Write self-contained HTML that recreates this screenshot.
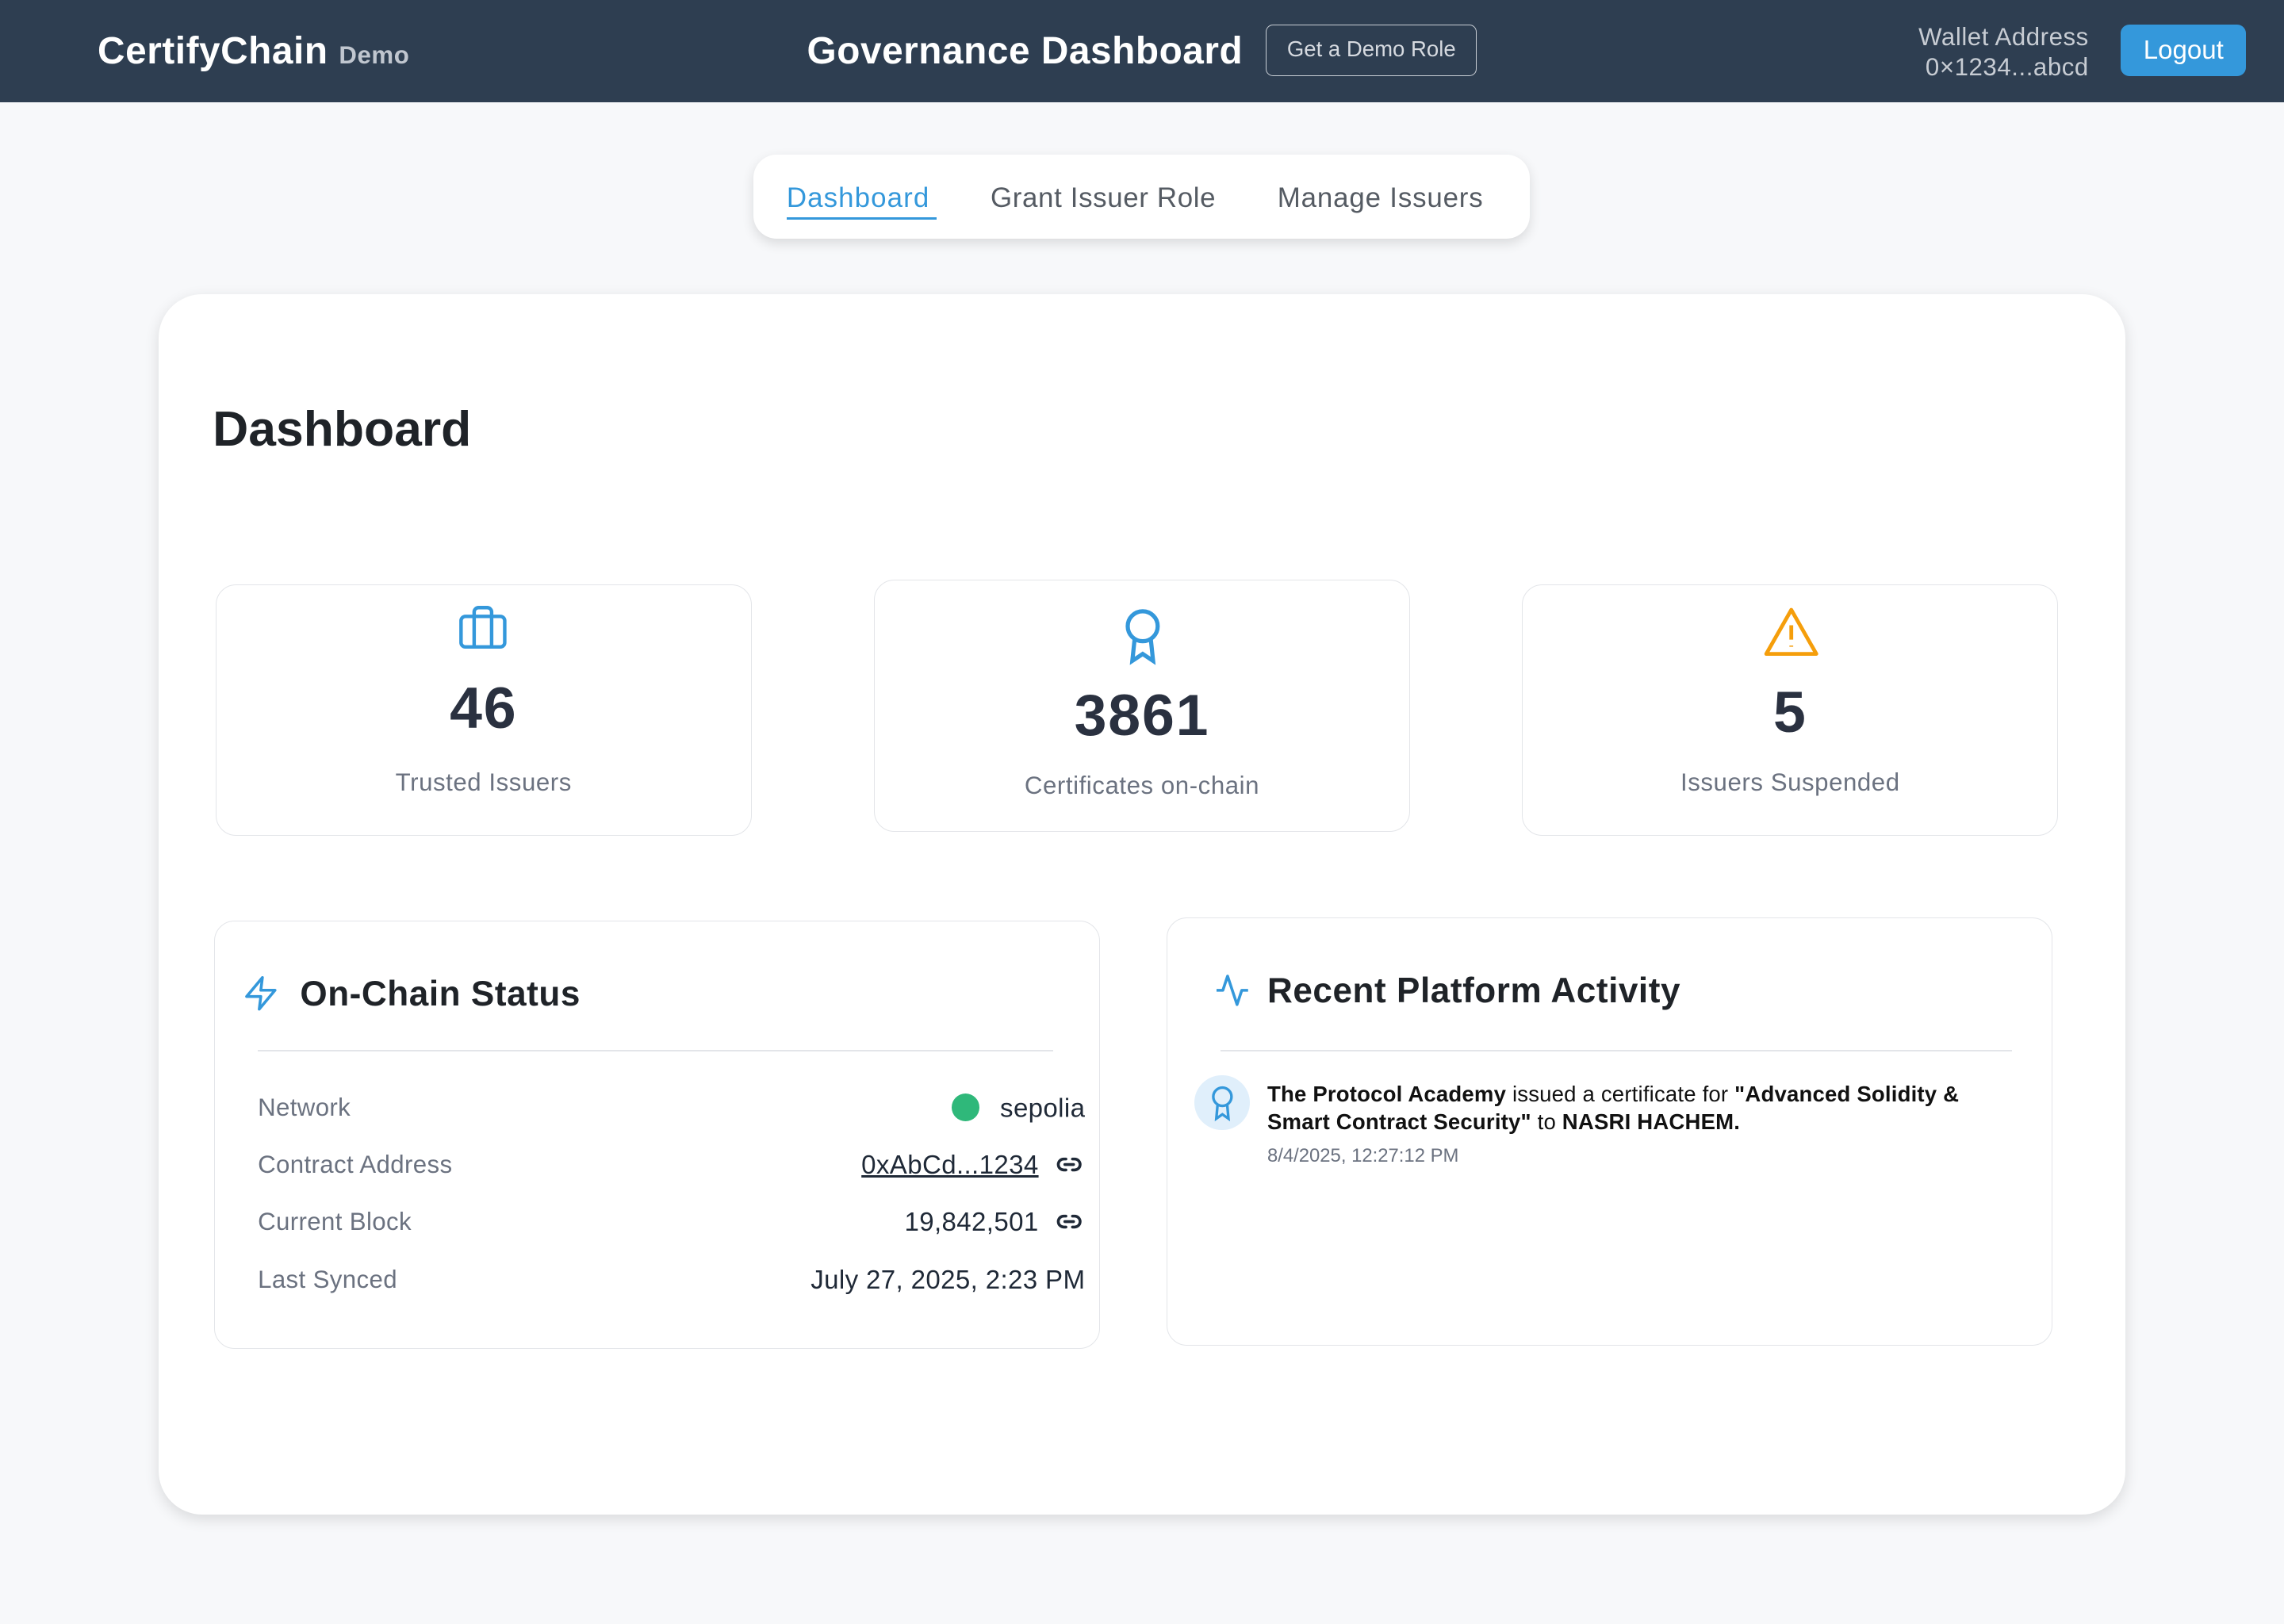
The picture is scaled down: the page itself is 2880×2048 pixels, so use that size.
<!DOCTYPE html>
<html><head><meta charset="utf-8"><style>
html,body{margin:0;padding:0;width:2880px;height:2048px;overflow:hidden;background:#f7f8fa;}
#w{zoom:1.83673;width:1568px;height:1115px;position:relative;font-family:"Liberation Sans",sans-serif;}
.a{position:absolute;white-space:nowrap;}
.hdr{left:0;top:0;width:1568px;height:70px;background:#2e3e51;}
.card{background:#fff;border:1px solid #e3e5e9;border-radius:14px;box-sizing:border-box;}
.num{font-weight:bold;color:#2a3140;font-size:40px;text-align:center;width:100%;letter-spacing:1px;}
.lbl{color:#6b7280;font-size:17px;text-align:center;width:100%;letter-spacing:0.3px;}
.row{left:177px;width:568px;font-size:17px;color:#6b7280;letter-spacing:0.2px;}
.val{position:absolute;right:0;top:0;color:#1f2937;font-size:18px;}
.lk{display:inline-block;vertical-align:-3px;margin-left:10px;}
</style></head><body><div id="w">
<div class="a hdr"></div>
<div class="a" style="left:67px;top:20px;color:#fff;font-size:26px;font-weight:bold;letter-spacing:0.3px;">CertifyChain <span style="font-size:17px;color:#c0c6cf;">Demo</span></div>
<div class="a" style="left:554px;top:20px;color:#fff;font-size:26px;font-weight:bold;letter-spacing:0.3px;">Governance Dashboard</div>
<div class="a" style="left:869px;top:17px;width:145px;height:35px;border:1px solid #c9ced5;border-radius:5px;box-sizing:border-box;color:#d6dae0;font-size:15px;line-height:33px;text-align:center;">Get a Demo Role</div>
<div class="a" style="left:1300px;top:15px;width:134px;text-align:right;color:#c7ccd3;font-size:17px;line-height:21px;letter-spacing:0.3px;">Wallet Address<br>0×1234...abcd</div>
<div class="a" style="left:1456px;top:17px;width:86px;height:35px;background:#3498db;border-radius:6px;color:#fff;font-size:18px;line-height:36px;text-align:center;">Logout</div>

<div class="a" style="left:517px;top:106px;width:533px;height:58px;background:#fff;border-radius:16px;box-shadow:0 3px 8px rgba(0,0,0,.12);"></div>
<div class="a" style="left:540px;top:125px;font-size:19px;color:#3498db;letter-spacing:0.6px;">Dashboard</div>
<div class="a" style="left:540px;top:149px;width:103px;height:2px;background:#3498db;"></div>
<div class="a" style="left:680px;top:125px;font-size:19px;color:#555b63;letter-spacing:0.35px;">Grant Issuer Role</div>
<div class="a" style="left:877px;top:125px;font-size:19px;color:#555b63;letter-spacing:0.45px;">Manage Issuers</div>

<div class="a" style="left:109px;top:202px;width:1350px;height:838px;background:#fff;border-radius:30px;box-shadow:0 3px 10px rgba(0,0,0,.12);"></div>
<div class="a" style="left:146px;top:275px;font-size:34px;font-weight:bold;color:#1f2328;">Dashboard</div>

<div class="a card" style="left:148px;top:401px;width:368px;height:173px;">
<svg class="a" style="left:164px;top:11px" width="38" height="36" viewBox="0 0 24 24" fill="none" stroke="#3498db" stroke-width="1.6"><rect x="2" y="7" width="20" height="14" rx="2"/><path d="M16 21V5a2 2 0 0 0-2-2h-4a2 2 0 0 0-2 2v16"/></svg>
<div class="a num" style="top:61px;">46</div>
<div class="a lbl" style="top:126px;">Trusted Issuers</div></div>

<div class="a card" style="left:600px;top:398px;width:368px;height:173px;">
<svg class="a" style="left:165px;top:16px" width="38" height="44" viewBox="0 0 24 26" fill="none" stroke="#3498db" stroke-width="1.8"><circle cx="12" cy="9" r="6.5"/><path d="M8.5 14.5L7.5 24l4.5-3 4.5 3-1-9.5"/></svg>
<div class="a num" style="top:69px;">3861</div>
<div class="a lbl" style="top:131px;">Certificates on-chain</div></div>

<div class="a card" style="left:1045px;top:401px;width:368px;height:173px;">
<svg class="a" style="left:164px;top:14px" width="40" height="36" viewBox="0 0 24 22" fill="none" stroke="#f59e0b" stroke-width="1.6" stroke-linejoin="round"><path d="M12 2L1.5 20.5h21z"/><path d="M12 8.5v6M12 17v.5"/></svg>
<div class="a num" style="top:64px;">5</div>
<div class="a lbl" style="top:126px;">Issuers Suspended</div></div>

<div class="a card" style="left:147px;top:632px;width:608px;height:294px;"></div>
<svg class="a" style="left:166px;top:668px" width="26" height="28" viewBox="0 0 24 24" fill="none" stroke="#3498db" stroke-width="1.8" stroke-linejoin="round"><path d="M13 2L3 14h9l-1 8 10-12h-9z"/></svg>
<div class="a" style="left:206px;top:669px;font-size:24px;font-weight:bold;color:#1f2328;letter-spacing:0.3px;">On-Chain Status</div>
<div class="a" style="left:177px;top:721px;width:546px;height:1px;background:#e3e5e9;"></div>
<div class="a row" style="top:751px;">Network<span class="val"><span style="display:inline-block;width:19px;height:19px;border-radius:50%;background:#2fb87a;vertical-align:-3px;margin-right:14px;"></span>sepolia</span></div>
<div class="a row" style="top:790px;">Contract Address<span class="val" style="right:0"><span style="text-decoration:underline;">0xAbCd...1234</span><svg class="lk" width="22" height="18" viewBox="0 0 24 24" fill="none" stroke="#1f2937" stroke-width="2.6" stroke-linecap="round"><path d="M9 17H7a5 5 0 0 1 0-10h2M15 7h2a5 5 0 0 1 0 10h-2M8 12h8"/></svg></span></div>
<div class="a row" style="top:829px;">Current Block<span class="val">19,842,501<svg class="lk" width="22" height="18" viewBox="0 0 24 24" fill="none" stroke="#1f2937" stroke-width="2.6" stroke-linecap="round"><path d="M9 17H7a5 5 0 0 1 0-10h2M15 7h2a5 5 0 0 1 0 10h-2M8 12h8"/></svg></span></div>
<div class="a row" style="top:869px;">Last Synced<span class="val">July 27, 2025, 2:23 PM</span></div>

<div class="a card" style="left:801px;top:630px;width:608px;height:294px;"></div>
<svg class="a" style="left:833px;top:667px" width="26" height="26" viewBox="0 0 24 24" fill="none" stroke="#3498db" stroke-width="1.8" stroke-linejoin="round"><path d="M2 12h4l3-9 6 18 3-9h4"/></svg>
<div class="a" style="left:870px;top:667px;font-size:24px;font-weight:bold;color:#1f2328;letter-spacing:0.3px;">Recent Platform Activity</div>
<div class="a" style="left:838px;top:721px;width:543px;height:1px;background:#e3e5e9;"></div>
<div class="a" style="left:820px;top:738px;width:38px;height:38px;border-radius:50%;background:#e0effb;"></div>
<svg class="a" style="left:829px;top:743px" width="20" height="28" viewBox="0 0 24 30" fill="none" stroke="#3498db" stroke-width="2.2"><circle cx="12" cy="10" r="7.5"/><path d="M8 17l-1 11 5-3.5 5 3.5-1-11"/></svg>
<div class="a" style="left:870px;top:742px;font-size:15px;line-height:19px;color:#111;letter-spacing:0.1px;">
<b>The Protocol Academy</b> issued a certificate for <b>"Advanced Solidity &amp;<br>Smart Contract Security"</b> to <b>NASRI HACHEM.</b></div>
<div class="a" style="left:870px;top:786px;font-size:13px;color:#6b7280;">8/4/2025, 12:27:12 PM</div>
</div></body></html>
